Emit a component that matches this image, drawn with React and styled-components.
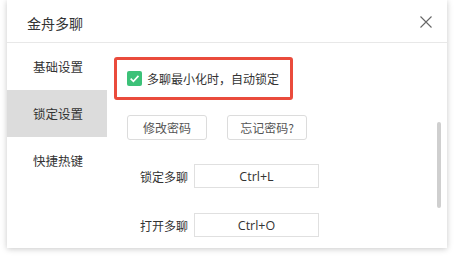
import React, { useState } from "react";
import styled, { createGlobalStyle } from "styled-components";

const GlobalStyle = createGlobalStyle`
  * { box-sizing: border-box; }
  body {
    margin: 0;
    background: #ffffff;
    font-family: "Noto Sans CJK SC", "Noto Sans", sans-serif;
    color: #333;
  }
`;

const Page = styled.div`
  width: 454px;
  height: 262px;
  padding: 0 7px;
  overflow: hidden;
`;

const Dialog = styled.div`
  width: 440px;
  height: 248px;
  background: #fff;
  box-shadow: 0 1px 6px rgba(0, 0, 0, 0.22);
  display: flex;
  flex-direction: column;
`;

const Header = styled.div`
  height: 43px;
  padding: 3px 14px 0 20px;
  border-bottom: 1px solid #e8e8e8;
  display: flex;
  align-items: center;
  justify-content: space-between;
`;

const Title = styled.div`
  font-size: 14px;
  color: #333;
`;

const Close = styled.button`
  border: none;
  background: none;
  padding: 0;
  width: 14px;
  height: 14px;
  display: flex;
  cursor: pointer;
  margin-top: -2px;
`;

const Body = styled.div`
  flex: 1;
  display: flex;
  min-height: 0;
`;

const Sidebar = styled.div`
  width: 100px;
  display: flex;
  flex-direction: column;
`;

const NavItem = styled.div`
  height: 47px;
  padding-left: 26px;
  display: flex;
  align-items: center;
  font-size: 12.5px;
  color: #333;
  background: ${(p) => (p.$active ? "#dcdcdc" : "transparent")};
`;

const Content = styled.div`
  flex: 1;
  padding: 14px 0 0 7px;
  display: flex;
  flex-direction: column;
`;

const Highlight = styled.div`
  width: 179px;
  height: 43px;
  border: 3px solid #ea4b3c;
  border-radius: 3px;
  padding-left: 10px;
  display: flex;
  align-items: center;
  gap: 5px;
  font-size: 12px;
`;

const Check = styled.span`
  width: 15px;
  height: 15px;
  border-radius: 2px;
  background: #3cc178;
  display: flex;
  align-items: center;
  justify-content: center;
`;

const ButtonRow = styled.div`
  display: flex;
  gap: 20px;
  margin: 15px 0 0 13px;
`;

const Button = styled.button`
  width: 80px;
  height: 25px;
  border: 1px solid #dcdcdc;
  border-radius: 3px;
  background: #fff;
  font-family: inherit;
  font-size: 12px;
  color: #555;
  padding: 0;
`;

const HotkeyRow = styled.div`
  display: flex;
  align-items: center;
  margin-top: ${(p) => p.$gap}px;
  padding-left: 25px;
`;

const Label = styled.div`
  width: 55px;
  font-size: 12px;
  color: #333;
  padding-right: 6px;
  text-align: right;
`;

const KeyBox = styled.div`
  width: 125px;
  height: 24px;
  border: 1px solid #e0e0e0;
  display: flex;
  align-items: center;
  justify-content: center;
  font-family: "Open Sans", "Noto Sans", sans-serif;
  font-size: 12.5px;
  color: #333;
`;

const ScrollTrack = styled.div`
  width: 4px;
  margin-right: 6px;
  padding-top: 79px;
`;

const Thumb = styled.div`
  height: 86px;
  border-radius: 2px;
  background: #cfcfcf;
`;

const navItems = ["基础设置", "锁定设置", "快捷热键"];

export default function App() {
  const [active, setActive] = useState(1);
  return (
    <Page>
      <GlobalStyle />
      <Dialog>
        <Header>
          <Title>金舟多聊</Title>
          <Close aria-label="close">
            <svg width="14" height="14" viewBox="0 0 14 14">
              <path d="M1.5 1.5 L12.5 12.5 M12.5 1.5 L1.5 12.5" stroke="#666" strokeWidth="1.1" />
            </svg>
          </Close>
        </Header>
        <Body>
          <Sidebar>
            {navItems.map((n, i) => (
              <NavItem key={n} $active={i === active} onClick={() => setActive(i)}>
                {n}
              </NavItem>
            ))}
          </Sidebar>
          <Content>
            <Highlight>
              <Check>
                <svg width="11" height="11" viewBox="0 0 10 10">
                  <path d="M1.5 5.2 L4 7.6 L8.6 2.6" fill="none" stroke="#fff" strokeWidth="1.5" />
                </svg>
              </Check>
              多聊最小化时，自动锁定
            </Highlight>
            <ButtonRow>
              <Button>修改密码</Button>
              <Button>忘记密码?</Button>
            </ButtonRow>
            <HotkeyRow $gap={24}>
              <Label>锁定多聊</Label>
              <KeyBox>Ctrl+L</KeyBox>
            </HotkeyRow>
            <HotkeyRow $gap={25}>
              <Label>打开多聊</Label>
              <KeyBox>Ctrl+O</KeyBox>
            </HotkeyRow>
          </Content>
          <ScrollTrack>
            <Thumb />
          </ScrollTrack>
        </Body>
      </Dialog>
    </Page>
  );
}
